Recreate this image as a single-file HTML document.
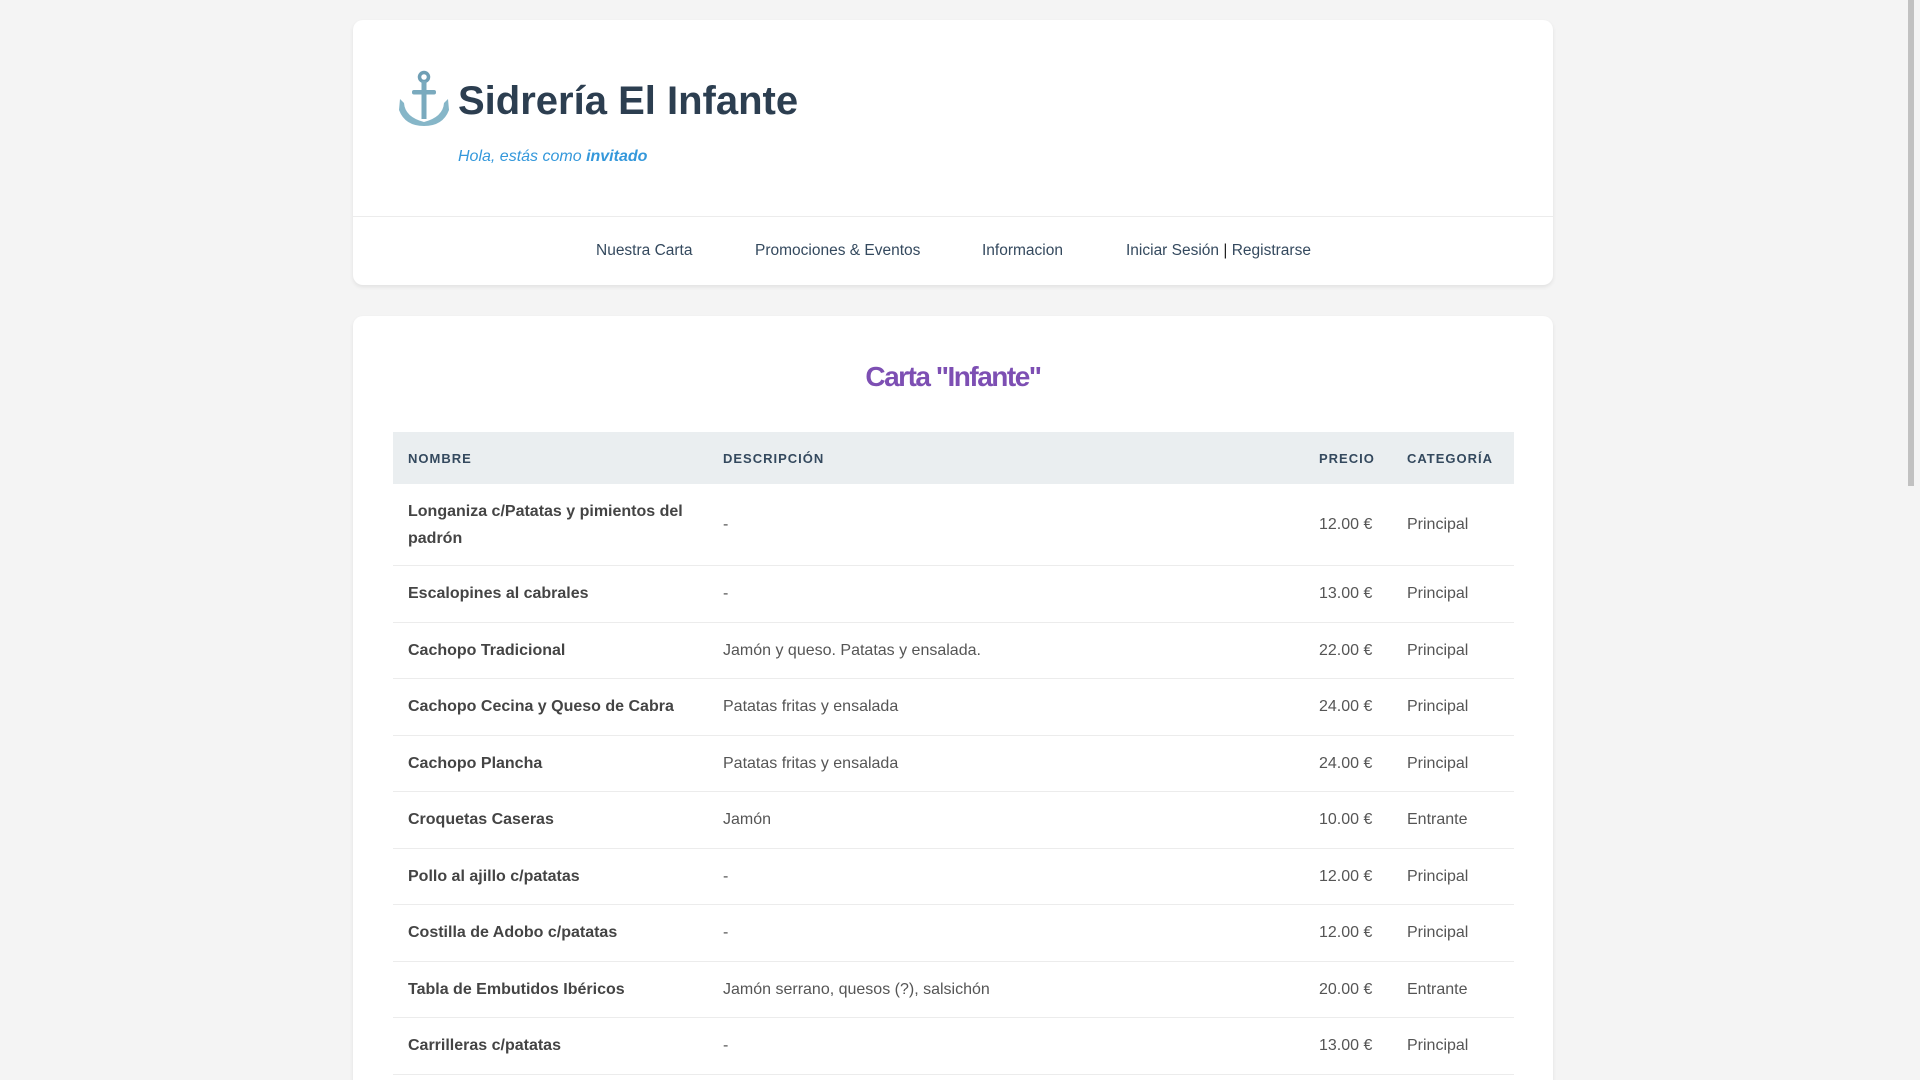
<!DOCTYPE html>
<html><head><meta charset="utf-8"><style>
html,body{margin:0;padding:0;overflow:hidden}
body{width:1920px;height:1080px;background:#f4f4f4;font-family:"Liberation Sans",sans-serif;position:relative}
.card{position:absolute;left:353px;width:1200px;background:#fff;border-radius:10px;box-shadow:0 2px 4px rgba(0,0,0,.08)}
#hdr{top:20px;height:265px}
#hdr .div{position:absolute;left:0;right:0;top:196px;border-top:1px solid #ececec}
h1{position:absolute;left:105px;top:57px;margin:0;font-size:40px;font-weight:bold;color:#2c3e50;line-height:48px}
.sub{position:absolute;left:105px;top:128px;font-size:16px;font-style:italic;color:#3498db}
.nav{position:absolute;top:221px;font-size:15.5px;color:#34495e;line-height:20px}
#main{top:316px;height:800px}
.title{position:absolute;left:0;right:0;top:45px;text-align:center;font-size:28px;font-weight:bold;color:#7d4fb3;letter-spacing:-1.5px}
table{position:absolute;left:40px;top:116px;width:1121px;border-collapse:collapse;font-size:16px}
th{background:#eaeef0;height:52px;padding:0 15px;text-align:left;font-size:13px;letter-spacing:1px;color:#34495e}
td{padding:0 15px;height:55.5px;border-bottom:1px solid #ececec;color:#555;line-height:27px}
td:first-child{font-weight:bold;color:#444}
tr.first td{height:81px}
.sb{position:absolute;right:0;top:0;width:16px;height:1080px;background:#f4f4f4}
.sb div{position:absolute;left:4px;top:0;width:6px;height:486px;background:#c1c1c1}
</style></head><body>
<div class="card" id="hdr">
<svg style="position:absolute;left:44px;top:50px" width="54" height="56" viewBox="0 0 54 56">
<circle cx="27" cy="7" r="4.5" fill="none" stroke="#6f9fb5" stroke-width="3.5"/>
<rect x="24.5" y="11" width="5" height="38" fill="#7aaabe"/>
<rect x="15" y="20" width="24" height="4.5" rx="2" fill="#7aaabe"/>
<path d="M3 29 L7 33 Q8 47 27 52 Q46 47 47 33 L51 29 L52 40 Q46 56 27 56 Q8 56 2 40 Z" fill="#86b6c8"/>
</svg>
<h1>Sidrería El Infante</h1>
<div class="sub">Hola, estás como <b>invitado</b></div>
<div class="div"></div>
<div class="nav" style="left:243px">Nuestra Carta</div>
<div class="nav" style="left:402px">Promociones &amp; Eventos</div>
<div class="nav" style="left:629px">Informacion</div>
<div class="nav" style="left:773px">Iniciar Sesión <span style="color:#222">|</span> Registrarse</div>
</div>
<div class="card" id="main">
<div class="title">Carta "Infante"</div>
<table>
<tr><th style="width:285px">NOMBRE</th><th>DESCRIPCIÓN</th><th style="width:58px">PRECIO</th><th style="width:92px">CATEGORÍA</th></tr>
<tr class="first"><td>Longaniza c/Patatas y pimientos del padrón</td><td>-</td><td>12.00 €</td><td>Principal</td></tr>
<tr><td>Escalopines al cabrales</td><td>-</td><td>13.00 €</td><td>Principal</td></tr>
<tr><td>Cachopo Tradicional</td><td>Jamón y queso. Patatas y ensalada.</td><td>22.00 €</td><td>Principal</td></tr>
<tr><td>Cachopo Cecina y Queso de Cabra</td><td>Patatas fritas y ensalada</td><td>24.00 €</td><td>Principal</td></tr>
<tr><td>Cachopo Plancha</td><td>Patatas fritas y ensalada</td><td>24.00 €</td><td>Principal</td></tr>
<tr><td>Croquetas Caseras</td><td>Jamón</td><td>10.00 €</td><td>Entrante</td></tr>
<tr><td>Pollo al ajillo c/patatas</td><td>-</td><td>12.00 €</td><td>Principal</td></tr>
<tr><td>Costilla de Adobo c/patatas</td><td>-</td><td>12.00 €</td><td>Principal</td></tr>
<tr><td>Tabla de Embutidos Ibéricos</td><td>Jamón serrano, quesos (?), salsichón</td><td>20.00 €</td><td>Entrante</td></tr>
<tr><td>Carrilleras c/patatas</td><td>-</td><td>13.00 €</td><td>Principal</td></tr>
</table>
</div>
<div class="sb"><div></div></div>
</body></html>
